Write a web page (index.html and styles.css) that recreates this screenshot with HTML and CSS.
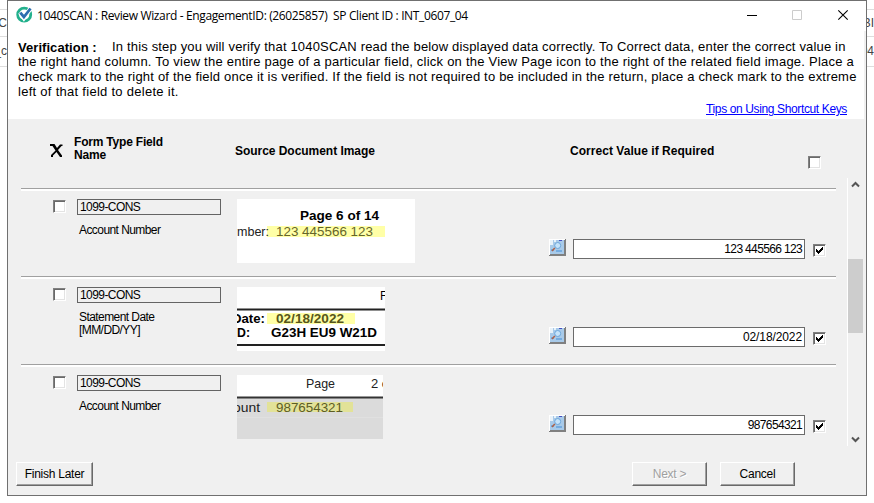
FILE: index.html
```html
<!DOCTYPE html>
<html lang="en">
<head>
<meta charset="utf-8">
<title>1040SCAN : Review Wizard</title>
<link rel="stylesheet" href="styles.css">
</head>
<body>
<svg width="0" height="0" class="defs">
  <symbol id="tick" viewBox="0 0 13 13"><path d="M3 5h1v1h1v1h1v-1h1v-1h1v-1h1v-1h1v3h-1v1h-1v1h-1v1h-1v1h-1v-1h-1v-1h-1z" fill="#000"/></symbol>
  <symbol id="magnify" viewBox="0 0 17 17">
    <path d="M0 0h17v17H0z" fill="#777"/><path d="M0 0h16v1H1v15H0z" fill="#fff"/><path d="M1 1h14v14H1z" fill="#a8cae9"/>
    <path d="M1 1h3v5H1zM5 1h2v2H5z" fill="#e8f2fa"/><path d="M2 10h3v2H2zM7 11h6v2H7z" fill="#75ace0"/><path d="M10 1h3v1h-3z" fill="#454fc0"/>
    <circle cx="8.700" cy="6.500" r="3" fill="#c5e3fa" stroke="#6ba5da"/><path d="M5.800 9L3 12" stroke="#b06045" stroke-width="1.500"/><path d="M1 15h14V1h2v16H1z" fill="#808080"/>
  </symbol>
</svg>
<div class="desk">
  <div class="strip left"><i></i><span>C</span><i></i><span>_c</span><i></i></div>
  <main class="window">
    <header class="titlebar">
      <svg class="logo" width="17" height="17" viewBox="0 0 17 17"><circle cx="8.200" cy="8.700" r="6.500" fill="none" stroke="#22b08c" stroke-width="2.800"/><path d="M4 6.400L7.900 11.800L14.500 2.500" fill="none" stroke="#fff" stroke-width="4.500"/><path d="M4.300 6.600L7.900 11L14.500 2.500" fill="none" stroke="#2b6eaf" stroke-width="2.800"/></svg>
      <span class="caption">1040SCAN : Review Wizard - EngagementID: (26025857)&nbsp; SP Client ID : INT_0607_04</span>
      <svg class="controls" width="110" height="14" viewBox="0 0 110 14" fill="none"><path d="M4 7.500h10" stroke="#000"/><path d="M49.500 2.500h9v9h-9z" stroke="#ccc"/><path d="M95.300 2.300l9.400 9.400M104.700 2.300l-9.400 9.400" stroke="#000" stroke-width="1.100"/></svg>
    </header>
    <section class="intro">
      <p class="l1"><b>Verification :</b><span>In this step you will verify that 1040SCAN read the below displayed data correctly. To Correct data, enter the correct value in</span></p>
      <p class="l2">the right hand column. To view the entire page of a particular field, click on the View Page icon to the right of the related field image. Place a</p>
      <p class="l3">check mark to the right of the field once it is verified. If the field is not required to be included in the return, place a check mark to the extreme</p>
      <p class="l4">left of that field to delete it.</p>
      <a class="tips">Tips on Using Shortcut Keys</a>
    </section>
    <section class="heads">
      <svg class="cross" width="14" height="15" viewBox="0 0 14 15"><path d="M0 1h4.500L7 5l3-3.500h2.500v1.500h-1L8 7l4 5.500V14h-2L6.500 9 3 12.500V14H1v-2l4.500-4.500L2.500 3H0z" fill="#000"/></svg>
      <b class="h-name">Form Type Field<br>Name</b>
      <b class="h-source">Source Document Image</b>
      <b class="h-value">Correct Value if Required</b>
      <span class="check h-check"></span>
    </section>
    <section class="body">
      <div class="rows">
        <article class="row">
          <span class="check"></span>
          <div class="field"><div class="type">1099-CONS</div><p>Account Number</p></div>
          <div class="scan"><svg width="178" height="64"><path fill="#fff" d="M0 0h178v64H0z"/><path fill="#ffffa7" d="M30 27h118v11H30z"/><text x="63" y="20.500" font-size="12.500" font-weight="bold" textLength="79" lengthAdjust="spacingAndGlyphs">Page 6 of 14</text><text x="0" y="37" textLength="32" lengthAdjust="spacingAndGlyphs" fill="#222">mber:</text><text x="39" y="37" textLength="97" lengthAdjust="spacingAndGlyphs" fill="#65652a">123 445566 123</text></svg></div>
          <svg class="view" width="17" height="17"><use href="#magnify"/></svg>
          <div class="input">123 445566 123</div>
          <span class="check done"><svg width="13" height="13"><use href="#tick"/></svg></span>
        </article>
        <article class="row">
          <span class="check"></span>
          <div class="field"><div class="type">1099-CONS</div><p class="two">Statement Date<br>[MM/DD/YY]</p></div>
          <div class="scan"><svg width="148" height="64"><path fill="#fff" d="M0 0h148v64H0z"/><path fill="#ffffa7" d="M30 26h88v11H30z"/><path d="M0 22.500h148M0 58h148" stroke="#222" stroke-width="2"/><text x="143" y="13" font-size="12">F</text><g font-weight="bold"><text x="-5" y="36" textLength="33" lengthAdjust="spacingAndGlyphs">Date:</text><text x="39" y="36" textLength="68" lengthAdjust="spacingAndGlyphs" fill="#56561b">02/18/2022</text><text x="0" y="50" textLength="13" lengthAdjust="spacingAndGlyphs">D:</text><text x="34" y="50" textLength="106" lengthAdjust="spacingAndGlyphs">G23H EU9 W21D</text></g></svg></div>
          <svg class="view" width="17" height="17"><use href="#magnify"/></svg>
          <div class="input date">02/18/2022</div>
          <span class="check done"><svg width="13" height="13"><use href="#tick"/></svg></span>
        </article>
        <article class="row">
          <span class="check"></span>
          <div class="field"><div class="type">1099-CONS</div><p>Account Number</p></div>
          <div class="scan"><svg width="146" height="64"><path fill="#fff" d="M0 0h146v23H0z"/><path fill="#dbdbdb" d="M0 23h146v41H0z"/><path fill="#e2e298" d="M30 27h86v10H30z"/><path d="M0 22.500h146" stroke="#333" stroke-width="2"/><path d="M0 42.500h146" stroke="#e0e0e0"/><g fill="#222"><text x="69" y="13" textLength="29" lengthAdjust="spacingAndGlyphs">Page</text><text x="134" y="13">2 of</text><text x="-4" y="37" textLength="27" lengthAdjust="spacingAndGlyphs">ount</text></g><text x="39" y="37" textLength="67" lengthAdjust="spacingAndGlyphs" fill="#5d5d25">987654321</text></svg></div>
          <svg class="view" width="17" height="17"><use href="#magnify"/></svg>
          <div class="input">987654321</div>
          <span class="check done"><svg width="13" height="13"><use href="#tick"/></svg></span>
        </article>
      </div>
      <div class="scrollbar">
        <svg width="15" height="15"><path d="M4 8.500l3.500-3.500L11 8.500" fill="none" stroke="#555" stroke-width="2"/></svg>
        <div class="thumb"></div>
        <svg width="15" height="15"><path d="M4 6.500L7.500 10L11 6.500" fill="none" stroke="#555" stroke-width="2"/></svg>
      </div>
    </section>
    <footer class="actions">
      <div class="btn">Finish Later</div>
      <div class="btn next">Next &gt;</div>
      <div class="btn cancel">Cancel</div>
    </footer>
  </main>
  <div class="strip right"><i></i><span>BI</span><i></i><span>04</span><i></i></div>
</div>
</body>
</html>
```
FILE: styles.css
```css
* { box-sizing: border-box; }
body { margin: 0; width: 874px; height: 503px; overflow: hidden; background: #fff; color: #000; font: 12px/13px "Liberation Sans", Arial, sans-serif; }
p { margin: 0; }
.defs { display: block; }
.desk { display: flex; height: 503px; }
.strip { flex: none; width: 7px; padding-top: 9px; overflow: hidden; font-size: 12px; color: #444; }
.strip i { display: block; height: 1px; background: #ddd; }
.strip span { display: flex; align-items: center; justify-content: flex-end; height: 26px; white-space: nowrap; }
.strip span + i + span { height: 29px; }
.window { display: flex; flex: none; flex-direction: column; width: 860px; height: 496px; border: 1px solid #707070; background: #f0f0f0; }
.titlebar { display: flex; flex: none; height: 30px; background: #fff; padding-left: 8px; }
.logo { margin-top: 5px; }
.caption { width: 706px; margin-left: 4px; padding-top: 8px; font: 12px/14px "Open Sans", sans-serif; letter-spacing: -0.36px; white-space: pre; }
.controls { margin-top: 7px; }
.intro { display: flex; flex: none; flex-direction: column; width: 856px; height: 88px; padding: 8px 0 0 10px; background: #fff; font-size: 13px; line-height: 15px; white-space: nowrap; }
.l1 { display: flex; letter-spacing: .17px; }
.l1 b { flex: none; width: 94px; letter-spacing: .05px; padding-top: 1px; height: 15px; }
.l2 { letter-spacing: .23px; }
.l3 { letter-spacing: .2px; }
.l4 { letter-spacing: .28px; }
.tips { align-self: flex-end; margin: 3px 17px 0 0; color: #00f; font-size: 12px; line-height: 14px; letter-spacing: -.37px; text-decoration: underline; }
.heads { display: flex; flex: none; height: 59px; padding-left: 42px; white-space: nowrap; }
.cross { margin-top: 24px; }
.h-name { width: 161px; margin: 17px 0 0 10px; letter-spacing: -.2px; }
.h-source { width: 335px; margin-top: 26px; letter-spacing: -.04px; }
.h-value { width: 238px; margin-top: 26px; letter-spacing: .04px; }
.check { width: 13px; height: 13px; border: 1px solid; border-color: #808080 #fff #fff #808080; background: #fff; box-shadow: inset 1px 1px #696969, inset -1px -1px #e3e3e3; }
.h-check { margin-top: 37px; }
.body { display: flex; flex: none; height: 268px; }
.rows { width: 815px; margin-left: 13px; padding-top: 10px; }
.row { display: flex; height: 88px; border-top: 1px solid #a0a0a0; box-shadow: inset 0 2px #fff; padding: 10px 0 0 32px; }
.row > .check { margin-top: 1px; }
.field { width: 144px; margin-left: 11px; white-space: nowrap; letter-spacing: -.57px; }
.type { height: 16px; padding-left: 2px; border: 1px solid #646464; line-height: 14px; }
.field p { padding: 9px 0 0 2px; }
.field .two { padding-top: 8px; }
.scan { width: 312px; margin-left: 16px; }
.scan svg { display: block; overflow: hidden; font: 13px "Liberation Sans", Arial, sans-serif; }
.view { margin-top: 40px; }
.input { width: 232px; height: 20px; margin: 40px 0 0 7px; padding-right: 2px; border: 1px solid #6b6b6b; background: #fff; line-height: 18px; letter-spacing: -.65px; text-align: right; }
.date { letter-spacing: -.1px; }
.row > .done { margin: 45px 0 0 8px; }
.done svg { display: block; margin: -1px; }
.scrollbar { display: flex; flex-direction: column; width: 17px; margin-left: 11px; border-left: 1px solid #fff; }
.scrollbar svg { display: block; }
.thumb { height: 74px; margin: 66px 0 98px; width: 15px; background: #cdcdcd; }
.actions { display: flex; padding: 16px 0 0 8px; }
.btn { width: 77px; height: 24px; border: 1px solid; border-color: #fff #696969 #696969 #fff; box-shadow: inset -1px -1px #a0a0a0; line-height: 22px; letter-spacing: -.25px; text-align: center; }
.next { width: 75px; margin-left: 539px; color: #a0a0a0; text-shadow: 1px 1px #fff; }
.cancel { width: 75px; margin-left: 13px; }
```
